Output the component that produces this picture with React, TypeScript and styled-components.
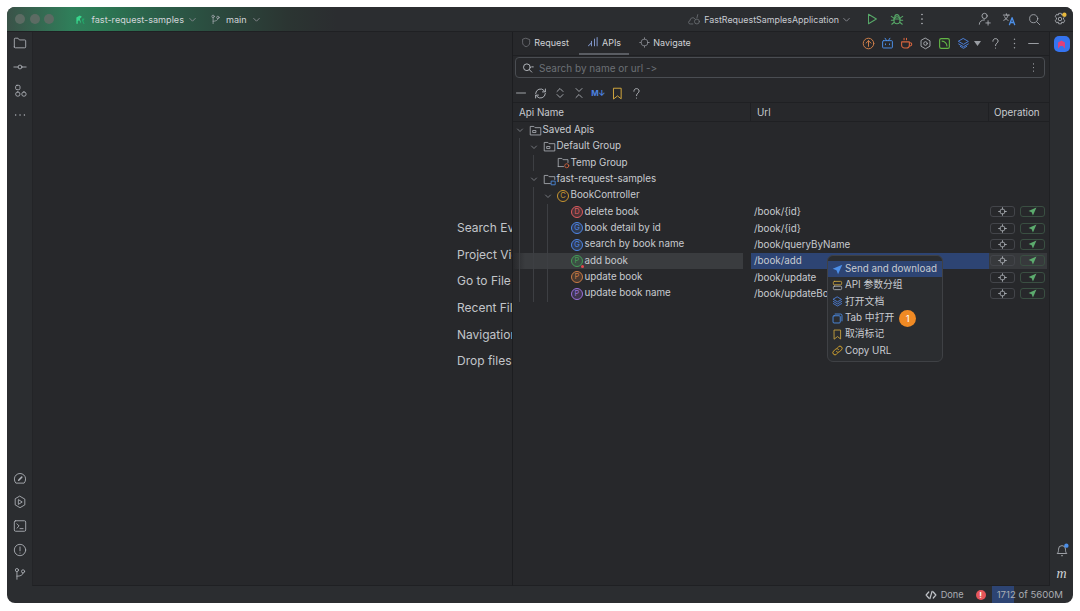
import React from 'react';
import styled, {createGlobalStyle} from 'styled-components';

const GlobalStyle = createGlobalStyle`
  html, body, #root {
    margin: 0;
    height: 100%;
    background: #fff;
  }
  body {
    font-family: Inter, "Noto Sans CJK SC", sans-serif;
    font-size: 9.8px;
    font-variant-ligatures: none;
    font-feature-settings: "calt" 0;
    color: #c8cbd0;
  }
  * {
    box-sizing: border-box;
  }
`;

const Page = styled.div`
  width: 1080px;
  height: 611px;
  padding: 7px 7px 8px 7px;
`;

const Window = styled.div`
  width: 100%;
  height: 100%;
  display: flex;
  flex-direction: column;
  background: #2b2d30;
  border-radius: 8px;
  overflow: hidden;
  position: relative;
`;

const TitleBar = styled.div`
  height: 25px;
  flex: none;
  display: flex;
  align-items: center;
  padding: 0 0 0 8px;
  font-size: 9.1px;
  border-bottom: 1px solid #1f2023;
  background: linear-gradient(90deg, #3a5248 0, #2f7f5a 65px, #2c7a55 90px, #2b5f49 150px, #2b4a3e 210px, #2b3532 280px, #2b2d30 330px);
`;

const Light = styled.span`
  width: 10px;
  height: 10px;
  border-radius: 50%;
  background: #5c6b63;
  margin-right: 4.5px;
`;

const ProjectName = styled.span<{ $left?: number }>`
  margin-left: ${p => p.$left ?? 0}px;
  color: #d2d5d9;
`;

const RunConfig = styled.span`
  font-size: 8.9px;
`;

const TitleGroup = styled.div<{ $gap?: number; $left?: number; $right?: number }>`
  display: flex;
  align-items: center;
  gap: ${p => p.$gap ?? 4}px;
  margin-left: ${p => p.$left ?? 0}px;
  margin-right: ${p => p.$right ?? 0}px;
`;

const Spacer = styled.div`
  flex: 1;
`;

const Body = styled.div`
  flex: 1;
  display: flex;
  min-height: 0;
`;

const SideRail = styled.div<{ $width: number }>`
  width: ${p => p.$width}px;
  flex: none;
  display: flex;
  flex-direction: column;
  align-items: center;
  padding: 3px 0 4px;
  gap: 8px;
`;

const RailIcon = styled.div`
  width: 16px;
  height: 16px;
  display: flex;
  align-items: center;
  justify-content: center;
`;

const Editor = styled.div`
  width: 480px;
  flex: none;
  display: flex;
  flex-direction: column;
  justify-content: center;
  padding: 0 0 27px 424px;
  overflow: hidden;
  background: #27282b;
  border-left: 1px solid #232427;
  border-bottom: 1px solid #1f2023;
`;

const Hint = styled.div`
  height: 26.6px;
  line-height: 26.6px;
  font-size: 12px;
  white-space: nowrap;
  color: #c2c5ca;
`;

const ToolWindow = styled.div`
  width: 538px;
  flex: none;
  display: flex;
  flex-direction: column;
  background: #27282b;
  border-left: 1px solid #1c1d20;
  border-right: 1px solid #1f2023;
  border-bottom: 1px solid #1f2023;
  position: relative;
`;

const Tabs = styled.div`
  height: 24px;
  flex: none;
  display: flex;
  align-items: stretch;
  padding: 0 8px;
  border-bottom: 1px solid #1f2023;
`;

const Tab = styled.div<{ $active?: boolean; $width: number; $shift?: number }>`
  width: ${p => p.$width}px;
  display: flex;
  align-items: center;
  justify-content: center;
  gap: 3px;
  color: #cfd2d6;
  font-size: 9px;
  padding: 0 ${p => p.$shift ?? 0}px 1px 0;
  border-bottom: 2px solid ${p => (p.$active ? '#5a5d63' : 'transparent')};
`;

const TabTools = styled.div`
  margin-left: auto;
  display: flex;
  align-items: center;
  gap: 3px;
`;

const Caret = styled.svg`
  margin-left: -0.5px;
`;

const ToolSlot = styled.div<{ $left?: number }>`
  width: 16px;
  height: 16px;
  margin-left: ${p => p.$left ?? 0}px;
  display: flex;
  align-items: center;
  justify-content: center;
`;

const SearchBox = styled.div`
  height: 21px;
  margin: 1px 4px 0 2px;
  flex: none;
  display: flex;
  align-items: center;
  padding: 0 5px 0 6px;
  gap: 5px;
  font-size: 10px;
  border: 1px solid #4a4d52;
  border-radius: 4px;
  color: #6c7076;
`;

const Toolbar = styled.div`
  height: 25px;
  flex: none;
  display: flex;
  align-items: center;
  padding: 6px 0 0 0;
  margin-left: 0;
  gap: 3.3px;
  border-bottom: 1px solid #1f2023;
`;

const MdMark = styled.span`
  font-size: 8px;
  font-weight: 700;
  color: #4c82e0;
  letter-spacing: -0.3px;
`;

const Columns = styled.div`
  display: grid;
  grid-template-columns: 238px 238px 1fr;
`;

const HeaderRow = styled(Columns)`
  height: 19px;
  flex: none;
  border-bottom: 1px solid #1f2023;
`;

const HeaderCell = styled.div<{ $last?: boolean }>`
  display: flex;
  align-items: center;
  padding-left: ${p => (p.$last ? 5 : 6)}px;
  border-right: ${p => (p.$last ? 'none' : '1px solid #1f2023')};
`;

const TreeRow = styled(Columns)`
  height: 16.35px;
`;

const NameCell = styled.div<{ $selected?: boolean }>`
  display: flex;
  align-items: stretch;
  padding-left: 1px;
  margin-right: 8px;
  background: ${p => (p.$selected ? 'linear-gradient(90deg, #27282b 0, #3a3c3f 12px)' : 'transparent')};
`;

const Guide = styled.span`
  width: 14px;
  flex: none;
  &::before {
    content: '';
    display: block;
    width: 1px;
    height: 100%;
    margin-left: 5px;
    background: #3d3f43;
  }
`;

const Chevron = styled.span`
  width: 11px;
  flex: none;
  display: flex;
  align-items: center;
  justify-content: center;
`;

const NodeIcon = styled.span`
  width: 14px;
  margin-left: 3px;
  margin-right: 0.5px;
  flex: none;
  display: flex;
  align-items: center;
  justify-content: center;
`;

const NodeLabel = styled.span`
  line-height: 16px;
  white-space: nowrap;
  color: #c8cbd0;
`;

const MethodBadge = styled.span<{ $color: string; $dot?: boolean }>`
  width: 12px;
  height: 12px;
  border-radius: 50%;
  border: 1px solid ${p => p.$color};
  color: ${p => p.$color};
  background: ${p => p.$color}33;
  font-size: 7.5px;
  line-height: 10px;
  text-align: center;
  position: relative;
  &::after {
    content: '';
    display: ${p => (p.$dot ? 'block' : 'none')};
    position: absolute;
    right: -2px;
    bottom: -2px;
    width: 3px;
    height: 3px;
    border-radius: 50%;
    background: #e5484d;
  }
`;

const ClassBadge = styled(MethodBadge)`
  background: transparent;
`;

const UrlCell = styled.div<{ $selected?: boolean }>`
  display: flex;
  align-items: center;
  padding-left: 3px;
  white-space: nowrap;
  overflow: hidden;
  background: ${p => (p.$selected ? '#2d4473' : 'transparent')};
`;

const OpCell = styled.div<{ $selected?: boolean }>`
  display: flex;
  align-items: center;
  gap: 5px;
  padding-left: 1px;
  background: ${p => (p.$selected ? '#37393c' : 'transparent')};
  margin-right: 2px;
`;

const OpButton = styled.span<{ $green?: boolean }>`
  width: 25px;
  height: 11px;
  display: flex;
  align-items: center;
  justify-content: center;
  border: 1px solid ${p => (p.$green ? '#3a4f42' : '#43454a')};
  border-radius: 3px;
`;

const Menu = styled.div`
  position: absolute;
  left: 314px;
  top: 223px;
  width: 116px;
  height: 107px;
  padding: 5px 0;
  background: #2b2d30;
  border: 1px solid #3f4145;
  border-radius: 6px;
`;

const MenuItem = styled.div<{ $active?: boolean }>`
  height: 16.3px;
  display: flex;
  align-items: center;
  gap: 2px;
  padding-left: 3px;
  line-height: 12px;
  white-space: nowrap;
  background: ${p => (p.$active ? '#2d4473' : 'transparent')};
`;

const MenuIcon = styled.span`
  width: 12px;
  height: 12px;
  flex: none;
  display: flex;
  align-items: center;
  justify-content: center;
`;

const StepBadge = styled.span`
  width: 17px;
  height: 17px;
  margin-left: 3px;
  border-radius: 50%;
  background: #f08a24;
  color: #fff;
  font-size: 9.5px;
  line-height: 17px;
  text-align: center;
`;

const AvatarTile = styled.div`
  width: 16px;
  height: 16px;
  margin-top: 1px;
  border-radius: 5px;
  background: #3574f0;
  display: flex;
  align-items: center;
  justify-content: center;
`;

const MonoMark = styled.span`
  font-family: "Liberation Serif", serif;
  font-style: italic;
  font-size: 14px;
  color: #cfd2d6;
`;

const StatusBar = styled.div`
  height: 17px;
  flex: none;
  display: flex;
  align-items: center;
  justify-content: flex-end;
  padding-right: 10px;
  font-size: 9.6px;
  color: #a9acb2;
`;

const DoneLabel = styled.span`
  margin-left: 4px;
  font-size: 9.2px;
`;

const AlertDot = styled.span`
  width: 10px;
  height: 10px;
  margin: 0 6px 0 12px;
  border-radius: 50%;
  background: #e5565a;
  color: #fff;
  font-size: 8px;
  font-weight: 700;
  line-height: 10px;
  text-align: center;
`;

const Memory = styled.span`
  height: 17px;
  line-height: 17px;
  padding-left: 5px;
  background: linear-gradient(90deg, #2d4473 22px, transparent 22px);
`;

const Icon = ({size = 14, stroke = '#aeb1b7', width = 1, children}: {size?: number; stroke?: string; width?: number; children: React.ReactNode}) => (
    <svg width={size} height={size} viewBox="0 0 16 16" fill="none" stroke={stroke} strokeWidth={width} strokeLinecap="round" strokeLinejoin="round">
        {children}
    </svg>
);

const ChevronDown = ({size = 9}: {size?: number}) => (
    <Icon size={size} stroke="#8f9298" width={1.5}><path d="M3 6l5 5 5-5" /></Icon>
);

const FolderIcon = ({stroke = '#aeb1b7', size = 14}: {stroke?: string; size?: number}) => (
    <Icon size={size} stroke={stroke}><path d="M1.5 12.5v-9a1 1 0 0 1 1-1h3.2l1.6 2h6.2a1 1 0 0 1 1 1v7a1 1 0 0 1-1 1h-11a1 1 0 0 1-1-1z" /></Icon>
);

const SavedFolder = () => (
    <Icon size={13}>
        <path d="M1.5 13V3h4.5l1.5 1.5h7V13z" />
        <rect x="5" y="8" width="3.5" height="2.5" />
    </Icon>
);

const BranchIcon = ({size = 14}: {size?: number}) => (
    <Icon size={size}>
        <circle cx="4.5" cy="3.5" r="1.8" />
        <circle cx="11.5" cy="5" r="1.8" />
        <path d="M4.5 5.5V14M4.5 10.5c4 0 6.5-1 7-3.5" />
    </Icon>
);

const Dots = ({stroke = '#c0c3c8', size = 14}: {stroke?: string; size?: number}) => (
    <Icon size={size} stroke={stroke} width={1.8}><path d="M8 2.8v.1M8 8v.1M8 13.1v.1" /></Icon>
);

const Help = ({size = 14}: {size?: number}) => (
    <Icon size={size} stroke="#b4b7bc" width={1.2}>
        <path d="M4.8 5.2C4.8 3.3 6.2 2 8 2s3.2 1.2 3.2 3c0 2.4-3.2 2.6-3.2 5.5M8 13.6v.1" />
    </Icon>
);

const SendIcon = ({size = 9, fill = '#5cab6e'}: {size?: number; fill?: string}) => (
    <svg width={size} height={size} viewBox="0 0 16 16"><path d="M15 1L1 7l5.5 2.2L8.8 15z" fill={fill} /></svg>
);

const TargetIcon = ({size = 9}: {size?: number}) => (
    <Icon size={size} stroke="#aeb1b7" width={1.4}>
        <circle cx="8" cy="8" r="4.5" />
        <path d="M8 1v3M8 12v3M1 8h3M12 8h3" />
    </Icon>
);

const methods = [
    {name: 'delete book', letter: 'D', color: '#dd5c60', url: '/book/{id}'},
    {name: 'book detail by id', letter: 'G', color: '#4f86e6', url: '/book/{id}'},
    {name: 'search by book name', letter: 'G', color: '#4f86e6', url: '/book/queryByName'},
    {name: 'add book', letter: 'P', color: '#459c58', url: '/book/add', selected: true},
    {name: 'update book', letter: 'P', color: '#cb7b45', url: '/book/update'},
    {name: 'update book name', letter: 'P', color: '#9a70da', url: '/book/updateBookName'},
];

const Actions = ({selected}: {selected?: boolean}) => (
    <OpCell $selected={selected}>
        <OpButton><TargetIcon /></OpButton>
        <OpButton $green><SendIcon /></OpButton>
    </OpCell>
);

const Folders = ({depth, chevron, icon, label}: {depth: number; chevron?: boolean; icon: React.ReactNode; label: string}) => (
    <TreeRow>
        <NameCell>
            {Array.from({length: depth}, (_, i) => <Guide key={i} />)}
            <Chevron>{chevron && <ChevronDown size={8} />}</Chevron>
            <NodeIcon>{icon}</NodeIcon>
            <NodeLabel>{label}</NodeLabel>
        </NameCell>
        <div />
        <div />
    </TreeRow>
);

function App() {
    return (
        <Page>
            <GlobalStyle />
            <Window>
                <TitleBar>
                    <Light /><Light /><Light />
                    <TitleGroup $left={16}>
                        <svg width="11" height="13" viewBox="0 0 16 16">
                            <path d="M2 14V5l5-3 3 2-3 3 2 7-3-5-2 1v4z" fill="#37d68c" />
                            <path d="M11 6l3 1-2 3 2 4h-2l-2-5z" fill="#23a76a" />
                        </svg>
                    </TitleGroup>
                    <ProjectName $left={6}>fast-request-samples</ProjectName>
                    <TitleGroup $left={4}><ChevronDown /></TitleGroup>
                    <TitleGroup $left={13} $gap={5}>
                        <BranchIcon size={11} />
                        <ProjectName>main</ProjectName>
                        <ChevronDown />
                    </TitleGroup>
                    <Spacer />
                    <TitleGroup $gap={3}>
                        <Icon size={13} stroke="#6f7278">
                            <path d="M6 13.5H3a2 2 0 0 1-.5-4A3.5 3.5 0 0 1 9 7.5" />
                            <circle cx="11" cy="10.5" r="3" />
                            <path d="M12 2l-1 4" />
                        </Icon>
                        <RunConfig>FastRequestSamplesApplication</RunConfig>
                        <ChevronDown />
                    </TitleGroup>
                    <TitleGroup $left={14}>
                        <Icon size={14} stroke="#57a868" width={1.2}><path d="M4 2.5l9 5.5-9 5.5z" /></Icon>
                    </TitleGroup>
                    <TitleGroup $left={11}>
                        <Icon size={14} stroke="#57a868" width={1.2}>
                            <ellipse cx="8" cy="9.5" rx="3.5" ry="4" />
                            <path d="M5.5 5.5a2.5 2.5 0 0 1 5 0M1.5 5l3 2M14.5 5l-3 2M1.5 9.5h3M14.5 9.5h-3M2 14l2.5-2M14 14l-2.5-2M4.5 8h7" />
                        </Icon>
                    </TitleGroup>
                    <TitleGroup $left={11}><Dots /></TitleGroup>
                    <TitleGroup $left={49}>
                        <Icon size={14}>
                            <circle cx="7.5" cy="4.5" r="3" />
                            <path d="M1.5 14c0-3 2.5-5 6-5M11.5 10v5M9 12.5h5" />
                        </Icon>
                    </TitleGroup>
                    <TitleGroup $left={10}>
                        <Icon size={14}>
                            <path d="M1.5 3.5h7M5 2v1.5M7 3.5c-.5 3-2.5 5-5 6M3 5.5c.8 2 2.5 3.5 4 4" />
                            <path d="M8.5 14.5l3-8 3 8M9.5 12h4" stroke="#4c8fe8" strokeWidth="1.5" />
                        </Icon>
                    </TitleGroup>
                    <TitleGroup $left={12}>
                        <Icon size={13}><circle cx="7" cy="7" r="5" /><path d="M11 11l3.5 3.5" /></Icon>
                    </TitleGroup>
                    <TitleGroup $left={12} $right={6}>
                        <svg width="14" height="14" viewBox="0 0 16 16" fill="none" stroke="#aeb1b7">
                            <path d="M6.5 1.5h3l.5 2 2-.8 1.5 2.6-1.5 1.4v1.6l1.5 1.4-1.5 2.6-2-.8-.5 2h-3l-.5-2-2 .8-1.5-2.6L4 8.3V6.7L2.5 5.3 4 2.7l2 .8z" />
                            <circle cx="8" cy="8" r="2" />
                            <circle cx="13" cy="3" r="2.5" fill="#e8b93c" stroke="none" />
                        </svg>
                    </TitleGroup>
                </TitleBar>
                <Body>
                    <SideRail $width={25}>
                        <RailIcon><FolderIcon /></RailIcon>
                        <RailIcon>
                            <Icon><circle cx="8" cy="8" r="2.2" /><path d="M1 8h4.8M10.2 8H15" /></Icon>
                        </RailIcon>
                        <RailIcon>
                            <Icon>
                                <rect x="3" y="1.5" width="5" height="5" rx="1.5" />
                                <rect x="3" y="9" width="5" height="5" rx="2.5" />
                                <rect x="10" y="9" width="5" height="5" rx="2.5" />
                            </Icon>
                        </RailIcon>
                        <RailIcon>
                            <Icon width={1.6}><path d="M3 8h.1M8 8h.1M13 8h.1" /></Icon>
                        </RailIcon>
                        <Spacer />
                        <RailIcon>
                            <Icon>
                                <path d="M3 13.5a6.5 6.5 0 1 1 10 0z" />
                                <path d="M6.5 10.5L10 7" strokeWidth="1.8" />
                            </Icon>
                        </RailIcon>
                        <RailIcon>
                            <Icon>
                                <path d="M8 1.5l5.5 3.2v6.6L8 14.5l-5.5-3.2V4.7z" />
                                <path d="M6.5 5.5l4 2.5-4 2.5z" />
                            </Icon>
                        </RailIcon>
                        <RailIcon>
                            <Icon>
                                <rect x="1.5" y="2" width="13" height="12" rx="1.5" />
                                <path d="M4.5 5.5L7 8l-2.5 2.5M8 11h3.5" />
                            </Icon>
                        </RailIcon>
                        <RailIcon>
                            <Icon><circle cx="8" cy="8" r="6.5" /><path d="M8 4.5V9M8 11.5v.1" /></Icon>
                        </RailIcon>
                        <RailIcon><BranchIcon /></RailIcon>
                    </SideRail>
                    <Editor>
                        {['Search Everywhere', 'Project View', 'Go to File', 'Recent Files', 'Navigation Bar', 'Drop files here to open them'].map(h => (
                            <Hint key={h}>{h}</Hint>
                        ))}
                    </Editor>
                    <ToolWindow>
                        <Tabs>
                            <Tab $width={58} $shift={10}>
                                <Icon size={11} stroke="#85888e"><path d="M8 1.5l5.5 2v5c0 3-2.5 5-5.5 6-3-1-5.500-3-5.500-6v-5z" /></Icon>
                                Request
                            </Tab>
                            <Tab $active $width={50}>
                                <Icon size={12} stroke="#7f95c8" width={1.4}><path d="M2 13l4-4M6 13V7M10 13V4M13.5 13V2" /></Icon>
                                APIs
                            </Tab>
                            <Tab $width={72}>
                                <Icon size={11} stroke="#9b9ea4"><circle cx="8" cy="8" r="5" /><path d="M8 1v2M8 13v2M1 8h2M13 8h2" /></Icon>
                                Navigate
                            </Tab>
                            <TabTools>
                                <ToolSlot>
                                    <Icon size={13} stroke="#d0804a" width={1.2}><circle cx="8" cy="8" r="6.5" /><path d="M5 7.5l3-3 3 3M8 4.5v7" /></Icon>
                                </ToolSlot>
                                <ToolSlot>
                                    <Icon size={13} stroke="#4c8fe8" width={1.2}><rect x="2" y="4.5" width="12" height="9" rx="1" /><path d="M5 1.5l2 3M11 1.5l-2 3M5.5 8.5v1M10.5 8.5v1" /></Icon>
                                </ToolSlot>
                                <ToolSlot>
                                    <Icon size={13} stroke="#d9663f" width={1.3}><path d="M2 6h9.5v4A3.5 3.5 0 0 1 8 13.5H5.5A3.5 3.5 0 0 1 2 10zM11.5 7h1a1.5 1.5 0 0 1 0 4h-1M5 1.5v2M8 1.5v2" /></Icon>
                                </ToolSlot>
                                <ToolSlot>
                                    <Icon size={13} width={1.1}><path d="M8 1.5l5.5 3.2v6.6L8 14.5l-5.5-3.2V4.7z" /><circle cx="8" cy="8" r="2.2" /></Icon>
                                </ToolSlot>
                                <ToolSlot>
                                    <Icon size={13} stroke="#62b545" width={1.4}><rect x="2" y="2" width="12" height="12" rx="2" /><path d="M5 5c3 0 6 3 6 6" /></Icon>
                                </ToolSlot>
                                <ToolSlot>
                                    <Icon size={13} stroke="#4c7fd8" width={1.2}><path d="M8 2l6 3.5L8 9 2 5.5zM2 8.5L8 12l6-3.5M4 11.5L8 14l4-2.5" /></Icon>
                                </ToolSlot>
                                <Caret width="7" height="5" viewBox="0 0 7 5"><path d="M0 0h7L3.5 5z" fill="#9a9da3" /></Caret>
                                <ToolSlot $left={3.5}><Help size={13} /></ToolSlot>
                                <ToolSlot><Dots size={13} stroke="#9da0a6" /></ToolSlot>
                                <ToolSlot><Icon size={13} stroke="#9da0a6" width={1.2}><path d="M2 8h12" /></Icon></ToolSlot>
                            </TabTools>
                        </Tabs>
                        <SearchBox>
                            <Icon size={12} stroke="#c0c3c8" width={1.2}><circle cx="6.5" cy="7" r="4.5" /><path d="M10 10.5l3 3M13 6.5h2" /></Icon>
                            Search by name or url -&gt;
                            <Spacer />
                            <Dots size={11} stroke="#a5a8ae" />
                        </SearchBox>
                        <Toolbar>
                            <ToolSlot><Icon size={12} width={1.2}><path d="M2 8h12" /></Icon></ToolSlot>
                            <ToolSlot>
                                <Icon size={13} width={1.2}><path d="M2 8a6 6 0 0 1 10.5-3.5L14 6M14 8a6 6 0 0 1-10.5 3.5L2 10M14 2.5V6h-3.5M2 13.5V10h3.5" /></Icon>
                            </ToolSlot>
                            <ToolSlot><Icon size={12} width={1.2}><path d="M4 6l4-4 4 4M4 10l4 4 4-4" /></Icon></ToolSlot>
                            <ToolSlot><Icon size={12} width={1.2}><path d="M4 2l4 4 4-4M4 14l4-4 4 4" /></Icon></ToolSlot>
                            <ToolSlot><MdMark>M↓</MdMark></ToolSlot>
                            <ToolSlot><Icon size={13} stroke="#d3a83e" width={1.2}><path d="M3.5 1.5h9v13L8 11l-4.5 3.5z" /></Icon></ToolSlot>
                            <ToolSlot><Help size={13} /></ToolSlot>
                        </Toolbar>
                        <HeaderRow>
                            <HeaderCell>Api Name</HeaderCell>
                            <HeaderCell>Url</HeaderCell>
                            <HeaderCell $last>Operation</HeaderCell>
                        </HeaderRow>
                        <Folders depth={0} chevron icon={<SavedFolder />} label="Saved Apis" />
                        <Folders depth={1} chevron icon={<SavedFolder />} label="Default Group" />
                        <Folders depth={2} icon={
                            <Icon size={13}>
                                <path d="M1.5 13V3H6l1.5 1.5h6V8M8 13H1.5" />
                                <circle cx="12" cy="12" r="2.5" stroke="#d9663f" />
                            </Icon>
                        } label="Temp Group" />
                        <Folders depth={1} chevron icon={
                            <Icon size={13}>
                                <path d="M9 13H1.5V3H6l1.5 1.5h7V8" />
                                <rect x="10.5" y="10" width="4.5" height="4.5" stroke="#4c8fe8" />
                            </Icon>
                        } label="fast-request-samples" />
                        <TreeRow>
                            <NameCell>
                                <Guide /><Guide />
                                <Chevron><ChevronDown size={8} /></Chevron>
                                <NodeIcon><ClassBadge $color="#c9962f">C</ClassBadge></NodeIcon>
                                <NodeLabel>BookController</NodeLabel>
                            </NameCell>
                            <div />
                            <div />
                        </TreeRow>
                        {methods.map(m => (
                            <TreeRow key={m.name}>
                                <NameCell $selected={m.selected}>
                                    <Guide /><Guide /><Guide />
                                    <Chevron />
                                    <NodeIcon><MethodBadge $color={m.color} $dot={m.selected}>{m.letter}</MethodBadge></NodeIcon>
                                    <NodeLabel>{m.name}</NodeLabel>
                                </NameCell>
                                <UrlCell $selected={m.selected}>{m.url}</UrlCell>
                                <Actions selected={m.selected} />
                            </TreeRow>
                        ))}
                        <Menu>
                            <MenuItem $active><MenuIcon><SendIcon size={11} fill="#4c8fe8" /></MenuIcon>Send and download</MenuItem>
                            <MenuItem>
                                <MenuIcon>
                                    <Icon size={11} stroke="#c9a33e" width={1.3}><rect x="2" y="2" width="12" height="5" rx="1.5" /><rect x="2" y="9" width="12" height="5" rx="1.5" stroke="#aeb1b7" /></Icon>
                                </MenuIcon>
                                API 参数分组
                            </MenuItem>
                            <MenuItem>
                                <MenuIcon>
                                    <Icon size={11} stroke="#4c7fd8" width={1.3}><path d="M8 1.5L14 5 8 8.5 2 5zM2 8l6 3.5L14 8M2 11l6 3.5 6-3.5" /></Icon>
                                </MenuIcon>
                                打开文档
                            </MenuItem>
                            <MenuItem>
                                <MenuIcon>
                                    <Icon size={11} stroke="#4c8fe8" width={1.3}><rect x="1.5" y="4" width="10.5" height="10.5" rx="1.5" /><path d="M4.5 1.5h8a2 2 0 0 1 2 2v8" /></Icon>
                                </MenuIcon>
                                Tab 中打开
                                <StepBadge>1</StepBadge>
                            </MenuItem>
                            <MenuItem>
                                <MenuIcon><Icon size={11} stroke="#c9a33e" width={1.3}><path d="M3.5 1.5h9v13L8 11l-4.5 3.5z" /></Icon></MenuIcon>
                                取消标记
                            </MenuItem>
                            <MenuItem>
                                <MenuIcon>
                                    <Icon size={11} stroke="#d9a82e" width={1.4}><path d="M6.5 9.5a3 3 0 0 0 4.5.3l2.8-2.8a3.1 3.1 0 0 0-4.4-4.4l-.9.9M9.500 6.500a3 3 0 0 0-4.500-.3L2.200 9a3.100 3.100 0 0 0 4.400 4.400l.9-.9" /></Icon>
                                </MenuIcon>
                                Copy URL
                            </MenuItem>
                        </Menu>
                    </ToolWindow>
                    <SideRail $width={23}>
                        <AvatarTile>
                            <svg width="11" height="11" viewBox="0 0 16 16"><path d="M3 14V5l5-3 5 3v9l-3-4H6z" fill="#e0407a" /></svg>
                        </AvatarTile>
                        <Spacer />
                        <RailIcon>
                            <svg width="14" height="14" viewBox="0 0 16 16" fill="none" stroke="#aeb1b7">
                                <path d="M2.5 12C4 10.5 4 9 4 7a4 4 0 0 1 8 0c0 2 0 3.500 1.500 5zM7 14.500h2" />
                                <circle cx="13" cy="3" r="2.5" fill="#4c8fe8" stroke="none" />
                            </svg>
                        </RailIcon>
                        <RailIcon><MonoMark>m</MonoMark></RailIcon>
                    </SideRail>
                </Body>
                <StatusBar>
                    <Icon size={12} stroke="#c0c3c8" width={1.6}><path d="M5 4L1.5 8 5 12M11 4l3.5 4-3.5 4M9.5 3l-3 10" /></Icon>
                    <DoneLabel>Done</DoneLabel>
                    <AlertDot>!</AlertDot>
                    <Memory>1712 of 5600M</Memory>
                </StatusBar>
            </Window>
        </Page>
    );
}

export default App;
